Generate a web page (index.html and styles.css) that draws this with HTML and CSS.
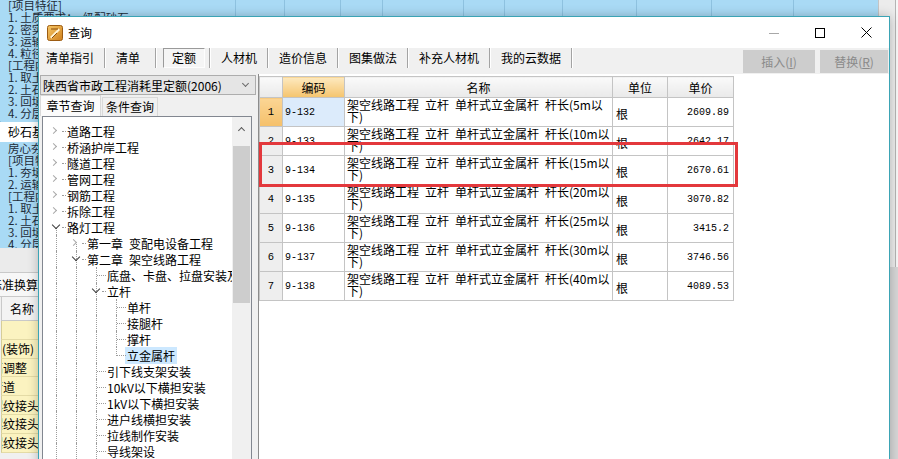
FILE: index.html
```html
<!DOCTYPE html>
<html lang="zh-CN">
<head>
  <meta charset="UTF-8">
  <title>查询</title>
  <link rel="stylesheet" href="styles.css">
</head>
<body>
  <div class="desk">

    <!-- main program, partly hidden behind the dialog -->
    <div class="app">
      <div class="app-main">
        <div class="bill">
          <div class="bill-text">
            <div>[项目特征]</div>
            <div>1. 土质要求：&nbsp;&nbsp;级配砂石</div>
            <div>2. 密实度：按设计要求</div>
            <div>3. 运输距离：自行考虑</div>
            <div>4. 粒径：5-40mm</div>
            <div>[工程内容]</div>
            <div>1. 取土</div>
            <div>2. 土石方运输</div>
            <div>3. 回填</div>
            <div>4. 分层夯实</div>
          </div>
          <div class="bill-col"></div>
          <div class="bill-col"></div>
          <div class="bill-col"></div>
          <div class="bill-col"></div>
          <div class="bill-col"></div>
          <div class="bill-col"></div>
          <div class="bill-col"></div>
          <div class="bill-col"></div>
          <div class="bill-col"></div>
          <div class="bill-col"></div>
          <div class="bill-col"></div>
        </div>
        <div class="bill-row">砂石基层</div>
        <div class="bill-more">
          <div>房心夯实回填</div>
          <div>[项目特征]</div>
          <div>1. 夯填</div>
          <div>2. 运输距离</div>
          <div>[工程内容]</div>
          <div>1. 取土</div>
          <div>2. 土石方运输</div>
          <div>3. 回填</div>
          <div>4. 分层夯实</div>
        </div>
        <div class="app-gap"></div>
        <div class="app-tab"><span>标准换算</span></div>
        <div class="app-head"><span>名称</span></div>
        <div class="yrow"></div>
        <div class="yrow start"><span>(装饰)</span></div>
        <div class="yrow in12"><span>标高调整</span></div>
        <div class="yrow in24"><span>人行道</span></div>
        <div class="yrow"><span>钢筋螺纹接头</span></div>
        <div class="yrow"><span>钢筋螺纹接头</span></div>
        <div class="yrow"><span>钢筋螺纹接头</span></div>
      </div>
      <div class="app-vscroll">
        <div class="vs-track"><div class="vs-thumb"></div></div>
      </div>
    </div>

    <!-- query dialog -->
    <div class="dialog">
      <div class="titlebar">
        <svg class="app-icon" viewBox="0 0 16 16">
          <defs>
            <linearGradient id="ig" x1="0" y1="0" x2="1" y2="1">
              <stop offset="0" stop-color="#f6c766"/>
              <stop offset="1" stop-color="#cf7f1c"/>
            </linearGradient>
          </defs>
          <rect x="0.5" y="0.5" width="15" height="15" rx="2" fill="url(#ig)" stroke="#9c5c12"/>
          <path d="M3 12 L11.5 3.5 L13 5 L4.5 13.5 Z" fill="#fff3d2"/>
          <path d="M4 4 h7 M10 8 l-5 5" stroke="#8a4e0c" stroke-width="1" fill="none"/>
        </svg>
        <span class="title">查询</span>
        <div class="win-btns">
          <span class="wb"><svg width="10" height="10"><path d="M0 5.5h10" stroke="#a8a8a8"/></svg></span>
          <span class="wb"><svg width="10" height="10"><rect x="0.5" y="0.5" width="9" height="9" fill="none" stroke="#000"/></svg></span>
          <span class="wb"><svg width="11" height="11"><path d="M0.5 0.5l10 10M10.5 0.5l-10 10" stroke="#000"/></svg></span>
        </div>
      </div>

      <div class="toolbar">
        <span class="tab">清单指引</span><i class="sep"></i>
        <span class="tab wide">清单</span><i class="sep"></i>
        <span class="tab on">定额</span><i class="sep"></i>
        <span class="tab">人材机</span><i class="sep"></i>
        <span class="tab">造价信息</span><i class="sep"></i>
        <span class="tab">图集做法</span><i class="sep"></i>
        <span class="tab">补充人材机</span><i class="sep"></i>
        <span class="tab">我的云数据</span><i class="sep"></i>
        <div class="actions">
          <button class="act ins">插入(<u>I</u>)</button>
          <button class="act rep">替换(<u>R</u>)</button>
        </div>
      </div>

      <div class="content">
        <div class="side">
          <div class="combo">
            <span>陕西省市政工程消耗里定额(2006)</span>
            <i class="combo-arrow"></i>
          </div>
          <div class="side-tabs">
            <span class="stab on">章节查询</span>
            <span class="stab">条件查询</span>
          </div>
          <div class="tree">
            <div class="tree-list">
              <div class="node"><span class="tg shut"><i></i></span><span class="lbl">道路工程</span></div>
              <div class="node"><span class="tg shut"><i></i></span><span class="lbl">桥涵护岸工程</span></div>
              <div class="node"><span class="tg shut"><i></i></span><span class="lbl">隧道工程</span></div>
              <div class="node"><span class="tg shut"><i></i></span><span class="lbl">管网工程</span></div>
              <div class="node"><span class="tg shut"><i></i></span><span class="lbl">钢筋工程</span></div>
              <div class="node"><span class="tg shut"><i></i></span><span class="lbl">拆除工程</span></div>
              <div class="node"><span class="tg open vdown"><i></i></span><span class="lbl">路灯工程</span></div>
              <div class="node"><span class="ind g"></span><span class="tg shut vdown"><i></i></span><span class="lbl">第一章&ensp;变配电设备工程</span></div>
              <div class="node"><span class="ind g"></span><span class="tg open vfull"><i></i></span><span class="lbl">第二章&ensp;架空线路工程</span></div>
              <div class="node"><span class="ind g"></span><span class="ind g"></span><span class="tg leaf vfull"></span><span class="lbl">底盘、卡盘、拉盘安装及电杆防腐</span></div>
              <div class="node"><span class="ind g"></span><span class="ind g"></span><span class="tg open vfull"><i></i></span><span class="lbl">立杆</span></div>
              <div class="node"><span class="ind g"></span><span class="ind g"></span><span class="ind g"></span><span class="tg leaf vfull"></span><span class="lbl">单杆</span></div>
              <div class="node"><span class="ind g"></span><span class="ind g"></span><span class="ind g"></span><span class="tg leaf vfull"></span><span class="lbl">接腿杆</span></div>
              <div class="node"><span class="ind g"></span><span class="ind g"></span><span class="ind g"></span><span class="tg leaf vfull"></span><span class="lbl">撑杆</span></div>
              <div class="node"><span class="ind g"></span><span class="ind g"></span><span class="ind g"></span><span class="tg leaf vup"></span><span class="lbl sel">立金属杆</span></div>
              <div class="node"><span class="ind g"></span><span class="ind g"></span><span class="tg leaf vfull"></span><span class="lbl">引下线支架安装</span></div>
              <div class="node"><span class="ind g"></span><span class="ind g"></span><span class="tg leaf vfull"></span><span class="lbl">10kV以下横担安装</span></div>
              <div class="node"><span class="ind g"></span><span class="ind g"></span><span class="tg leaf vfull"></span><span class="lbl">1kV以下横担安装</span></div>
              <div class="node"><span class="ind g"></span><span class="ind g"></span><span class="tg leaf vfull"></span><span class="lbl">进户线横担安装</span></div>
              <div class="node"><span class="ind g"></span><span class="ind g"></span><span class="tg leaf vfull"></span><span class="lbl">拉线制作安装</span></div>
              <div class="node"><span class="ind g"></span><span class="ind g"></span><span class="tg leaf vfull"></span><span class="lbl">导线架设</span></div>
            </div>
            <div class="tree-scroll">
              <div class="ts-up"><i></i></div>
              <div class="ts-thumb"></div>
            </div>
          </div>
        </div>

        <div class="grid-pane">
          <table class="quota">
            <colgroup>
              <col class="c-no"><col class="c-code"><col class="c-name"><col class="c-unit"><col class="c-price">
            </colgroup>
            <thead>
              <tr><th></th><th class="hot">编码</th><th>名称</th><th>单位</th><th>单价</th></tr>
            </thead>
            <tbody>
              <tr><td class="no hot-no">1</td><td class="code cur">9-132</td><td class="name">架空线路工程&ensp;立杆&ensp;单杆式立金属杆&ensp;杆长(5m以<br>下)</td><td class="unit">根</td><td class="price">2609.89</td></tr>
              <tr><td class="no">2</td><td class="code">9-133</td><td class="name">架空线路工程&ensp;立杆&ensp;单杆式立金属杆&ensp;杆长(10m以<br>下)</td><td class="unit">根</td><td class="price">2642.17</td></tr>
              <tr><td class="no">3</td><td class="code">9-134</td><td class="name">架空线路工程&ensp;立杆&ensp;单杆式立金属杆&ensp;杆长(15m以<br>下)</td><td class="unit">根</td><td class="price">2670.61</td></tr>
              <tr><td class="no">4</td><td class="code">9-135</td><td class="name">架空线路工程&ensp;立杆&ensp;单杆式立金属杆&ensp;杆长(20m以<br>下)</td><td class="unit">根</td><td class="price">3070.82</td></tr>
              <tr><td class="no">5</td><td class="code">9-136</td><td class="name">架空线路工程&ensp;立杆&ensp;单杆式立金属杆&ensp;杆长(25m以<br>下)</td><td class="unit">根</td><td class="price">3415.2</td></tr>
              <tr><td class="no">6</td><td class="code">9-137</td><td class="name">架空线路工程&ensp;立杆&ensp;单杆式立金属杆&ensp;杆长(30m以<br>下)</td><td class="unit">根</td><td class="price">3746.56</td></tr>
              <tr><td class="no">7</td><td class="code">9-138</td><td class="name">架空线路工程&ensp;立杆&ensp;单杆式立金属杆&ensp;杆长(40m以<br>下)</td><td class="unit">根</td><td class="price">4089.53</td></tr>
            </tbody>
          </table>
          <!-- red annotation frame drawn over row 3 -->
          <div class="mark"></div>
        </div>
      </div>
    </div>

  </div>
</body>
</html>
```

FILE: styles.css
```css
* {
  box-sizing: border-box;
}

body {
  margin: 0;
  font-family: "Noto Sans CJK SC", "Noto Sans", sans-serif;
  font-size: 12px;
  color: #000;
  background: #f0f0f0;
  overflow: hidden;
}

.desk {
  position: relative;
  width: 898px;
  height: 459px;
  overflow: hidden;
}

/* ---------- background program ---------- */
.app {
  display: flex;
  height: 459px;
}

.app-main {
  width: 878px;
  flex: none;
}

.bill {
  display: grid;
  grid-template-columns: 235px 49px 56px 42px 81px 41px 58px 74px 75px 82px 85px;
  height: 122px;
  background: #a9daf5;
  color: #1d2b38;
  overflow: hidden;
}

.bill-col {
  border-left: 1px solid #8ec2e0;
}

.bill-text, .bill-more {
  padding-left: 8px;
  font-size: 11.5px;
  line-height: 12px;
  white-space: nowrap;
  overflow: hidden;
}

.bill-text {
  margin-top: -1px;
}

.bill-row {
  height: 20px;
  line-height: 20px;
  padding-left: 8px;
  background: #fff;
}

.bill-more {
  height: 106px;
  background: #a9daf5;
  color: #1d2b38;
}

.app-gap {
  height: 25px;
  background: #ebebeb;
  border-bottom: 1px solid #c9c9c9;
}

.app-tab, .app-head, .yrow {
  display: flex;
  align-items: center;
  justify-content: flex-end;
  width: 38px;
  overflow: hidden;
  white-space: nowrap;
}

.app-tab span, .yrow span {
  flex: none;
}

.app-tab {
  height: 24px;
  background: #f7f7f7;
  border-bottom: 1px solid #c9c9c9;
}

.app-head {
  height: 24px;
  justify-content: flex-start;
  margin-left: 1px;
  padding-left: 8px;
  background: #f3f3f3;
  border-left: 1px solid #c9c9c9;
  border-bottom: 1px solid #c9c9c9;
}

.yrow {
  height: 18.8px;
  margin-left: 1px;
  background: #fbf3c0;
  border-left: 1px solid #d6cd98;
  border-bottom: 1px solid #e4dba6;
}

.yrow.start {
  justify-content: flex-start;
}

.yrow.in12 {
  padding-right: 12px;
}

.yrow.in24 {
  padding-right: 24px;
}

.app-vscroll {
  flex: 1;
  display: flex;
  flex-direction: column;
  background: #d6d6d6;
  border-left: 1px solid #c4c4c4;
}

.vs-track {
  height: 267px;
  background: #ececec;
}

.vs-thumb {
  height: 100%;
  margin-left: 16px;
  background: #f7f7f7;
  border-left: 1px solid #b4b4b4;
}

/* ---------- dialog ---------- */
.dialog {
  position: absolute;
  left: 38px;
  top: 16px;
  width: 852px;
  height: 460px;
  display: flex;
  flex-direction: column;
  background: #f0f0f0;
  border: 1px solid #3ba4b5;
  box-shadow: 0 0 10px rgba(0,0,0,0.25);
}

.titlebar {
  height: 31px;
  flex: none;
  display: flex;
  align-items: center;
  padding-left: 8px;
  background: #fff;
}

.app-icon {
  width: 16px;
  height: 16px;
  margin-right: 5px;
}

.win-btns {
  margin-left: auto;
  align-self: stretch;
  display: flex;
}

.wb {
  width: 46px;
  display: flex;
  align-items: center;
  justify-content: center;
}

.toolbar {
  height: 26px;
  flex: none;
  display: flex;
  align-items: flex-start;
}

.tab {
  height: 20px;
  line-height: 20px;
  padding: 0 10px;
  white-space: nowrap;
}

.tab:first-child {
  padding-left: 7px;
}

.tab.wide {
  padding-right: 15px;
}

.tab.on {
  margin: 0 4px 0 6px;
  padding: 0 8px;
  line-height: 18px;
  border: 1px solid;
  border-color: #9a9a9a #fdfdfd #fdfdfd #9a9a9a;
  background: #f5f5f5;
}

.sep {
  width: 2px;
  height: 20px;
  border-left: 1px solid #a3a3a3;
  border-right: 1px solid #fff;
}

.actions {
  margin: 2px 1px 0 auto;
  display: flex;
  gap: 5px;
}

.act {
  height: 23px;
  padding: 0;
  border: none;
  background: #cdcdcd;
  color: #8a8a8a;
  font: inherit;
}

.act.ins {
  width: 72px;
}

.act.rep {
  width: 68px;
}

.content {
  flex: 1;
  min-height: 0;
  display: flex;
}

/* left side: quota book + chapter tree */
.side {
  width: 219px;
  flex: none;
  display: flex;
  flex-direction: column;
  padding: 1px 0 0 1px;
}

.combo {
  width: 216px;
  height: 20px;
  flex: none;
  display: flex;
  align-items: center;
  padding-left: 2px;
  background: #e5e5e5;
  border: 1px solid #adadad;
  white-space: nowrap;
}

.combo-arrow {
  width: 5px;
  height: 5px;
  margin: -3px 7px 0 auto;
  border: solid #6a6a6a;
  border-width: 0 1px 1px 0;
  transform: rotate(45deg);
}

.side-tabs {
  height: 21px;
  flex: none;
  display: flex;
  align-items: flex-end;
}

.stab {
  height: 19px;
  line-height: 18px;
  text-align: center;
  border: 1px solid #d9d9d9;
  border-bottom: none;
  background: #f0f0f0;
}

.stab.on {
  width: 61px;
  height: 21px;
  line-height: 20px;
  background: #fbfbfb;
}

.stab:not(.on) {
  width: 56px;
  margin-left: 1px;
}

.tree {
  flex: 1;
  width: 210px;
  margin-left: 2px;
  display: flex;
  background: #fff;
  border: 1px solid #828790;
}

.tree-list {
  flex: 1;
  min-width: 0;
  padding: 6px 0 0 4px;
  overflow: hidden;
}

.node {
  display: flex;
  align-items: center;
  height: 16px;
  white-space: nowrap;
}

.ind, .tg {
  position: relative;
  width: 20px;
  height: 16px;
  flex: none;
}

.ind.g::before, .tg.vfull::before, .tg.vdown::before, .tg.vup::before {
  content: "";
  position: absolute;
  left: 9px;
  top: 0;
  bottom: 0;
  border-left: 1px dotted #9c9c9c;
}

.tg.vdown::before {
  top: 9px;
}

.tg.vup::before {
  bottom: 7px;
}

.tg::after {
  content: "";
  position: absolute;
  top: 8px;
  left: 15px;
  width: 4px;
  border-top: 1px dotted #9c9c9c;
}

.tg.leaf::after {
  left: 10px;
  width: 9px;
}

.tg i {
  position: absolute;
  z-index: 1;
}

.tg.shut i {
  left: 4px;
  top: 5px;
  width: 5px;
  height: 5px;
  border: solid #a8a8a8;
  border-width: 1.4px 1.4px 0 0;
  transform: rotate(45deg);
}

.tg.open i {
  left: 6px;
  top: 3px;
  width: 6px;
  height: 6px;
  border: solid #3c3c3c;
  border-width: 0 1.3px 1.3px 0;
  transform: rotate(45deg);
}

.lbl.sel {
  margin-left: -2px;
  padding: 0 2px;
  background: #cce8ff;
}

.tree-scroll {
  width: 19px;
  flex: none;
  background: #f0f0f0;
}

.ts-up {
  position: relative;
  height: 17px;
}

.ts-up i {
  position: absolute;
  left: 7px;
  top: 11px;
  width: 5px;
  height: 5px;
  border: solid #5a5a5a;
  border-width: 1.3px 0 0 1.3px;
  transform: rotate(45deg);
}

.ts-thumb {
  height: 157px;
  margin: 12px 1px 0 1px;
  background: #cdcdcd;
}

/* right side: quota table */
.grid-pane {
  flex: 1;
  position: relative;
  padding-top: 2px;
  background: #fff;
  border-left: 1px solid #8c8c8c;
}

.quota {
  border-collapse: collapse;
  table-layout: fixed;
  width: 474px;
}

.c-no { width: 23px; }
.c-code { width: 62px; }
.c-name { width: 268px; }
.c-unit { width: 55px; }
.c-price { width: 66px; }

.quota th, .quota td {
  padding: 0;
  border: 1px solid #c4c4c4;
  overflow: hidden;
  white-space: nowrap;
}

.quota thead tr {
  height: 21px;
}

.quota th {
  font-weight: normal;
  background: linear-gradient(#fafafa, #e9e9e9);
}

.quota th.hot {
  background: linear-gradient(#fde9bf, #f5c46d);
}

.quota tbody tr {
  height: 29px;
}

.quota td.no {
  text-align: center;
  background: #eeeeee;
  font-family: "Liberation Mono", monospace;
  font-size: 10.5px;
}

.quota td.hot-no {
  background: linear-gradient(#fbd594, #f5c06a);
}

.quota td.code {
  padding-left: 2px;
  font-family: "Liberation Mono", monospace;
  font-size: 10px;
}

.quota td.cur {
  background: #dcebfb;
}

.quota td.name {
  vertical-align: top;
  padding: 1px 0 0 2px;
  line-height: 12px;
}

.quota td.unit {
  padding: 2px 0 0 3px;
}

.quota td.price {
  padding-right: 4px;
  text-align: right;
  font-family: "Liberation Mono", monospace;
  font-size: 10px;
}

.mark {
  position: absolute;
  left: 0;
  top: 68px;
  width: 479px;
  height: 45px;
  border: 3px solid #e3383c;
}
```
